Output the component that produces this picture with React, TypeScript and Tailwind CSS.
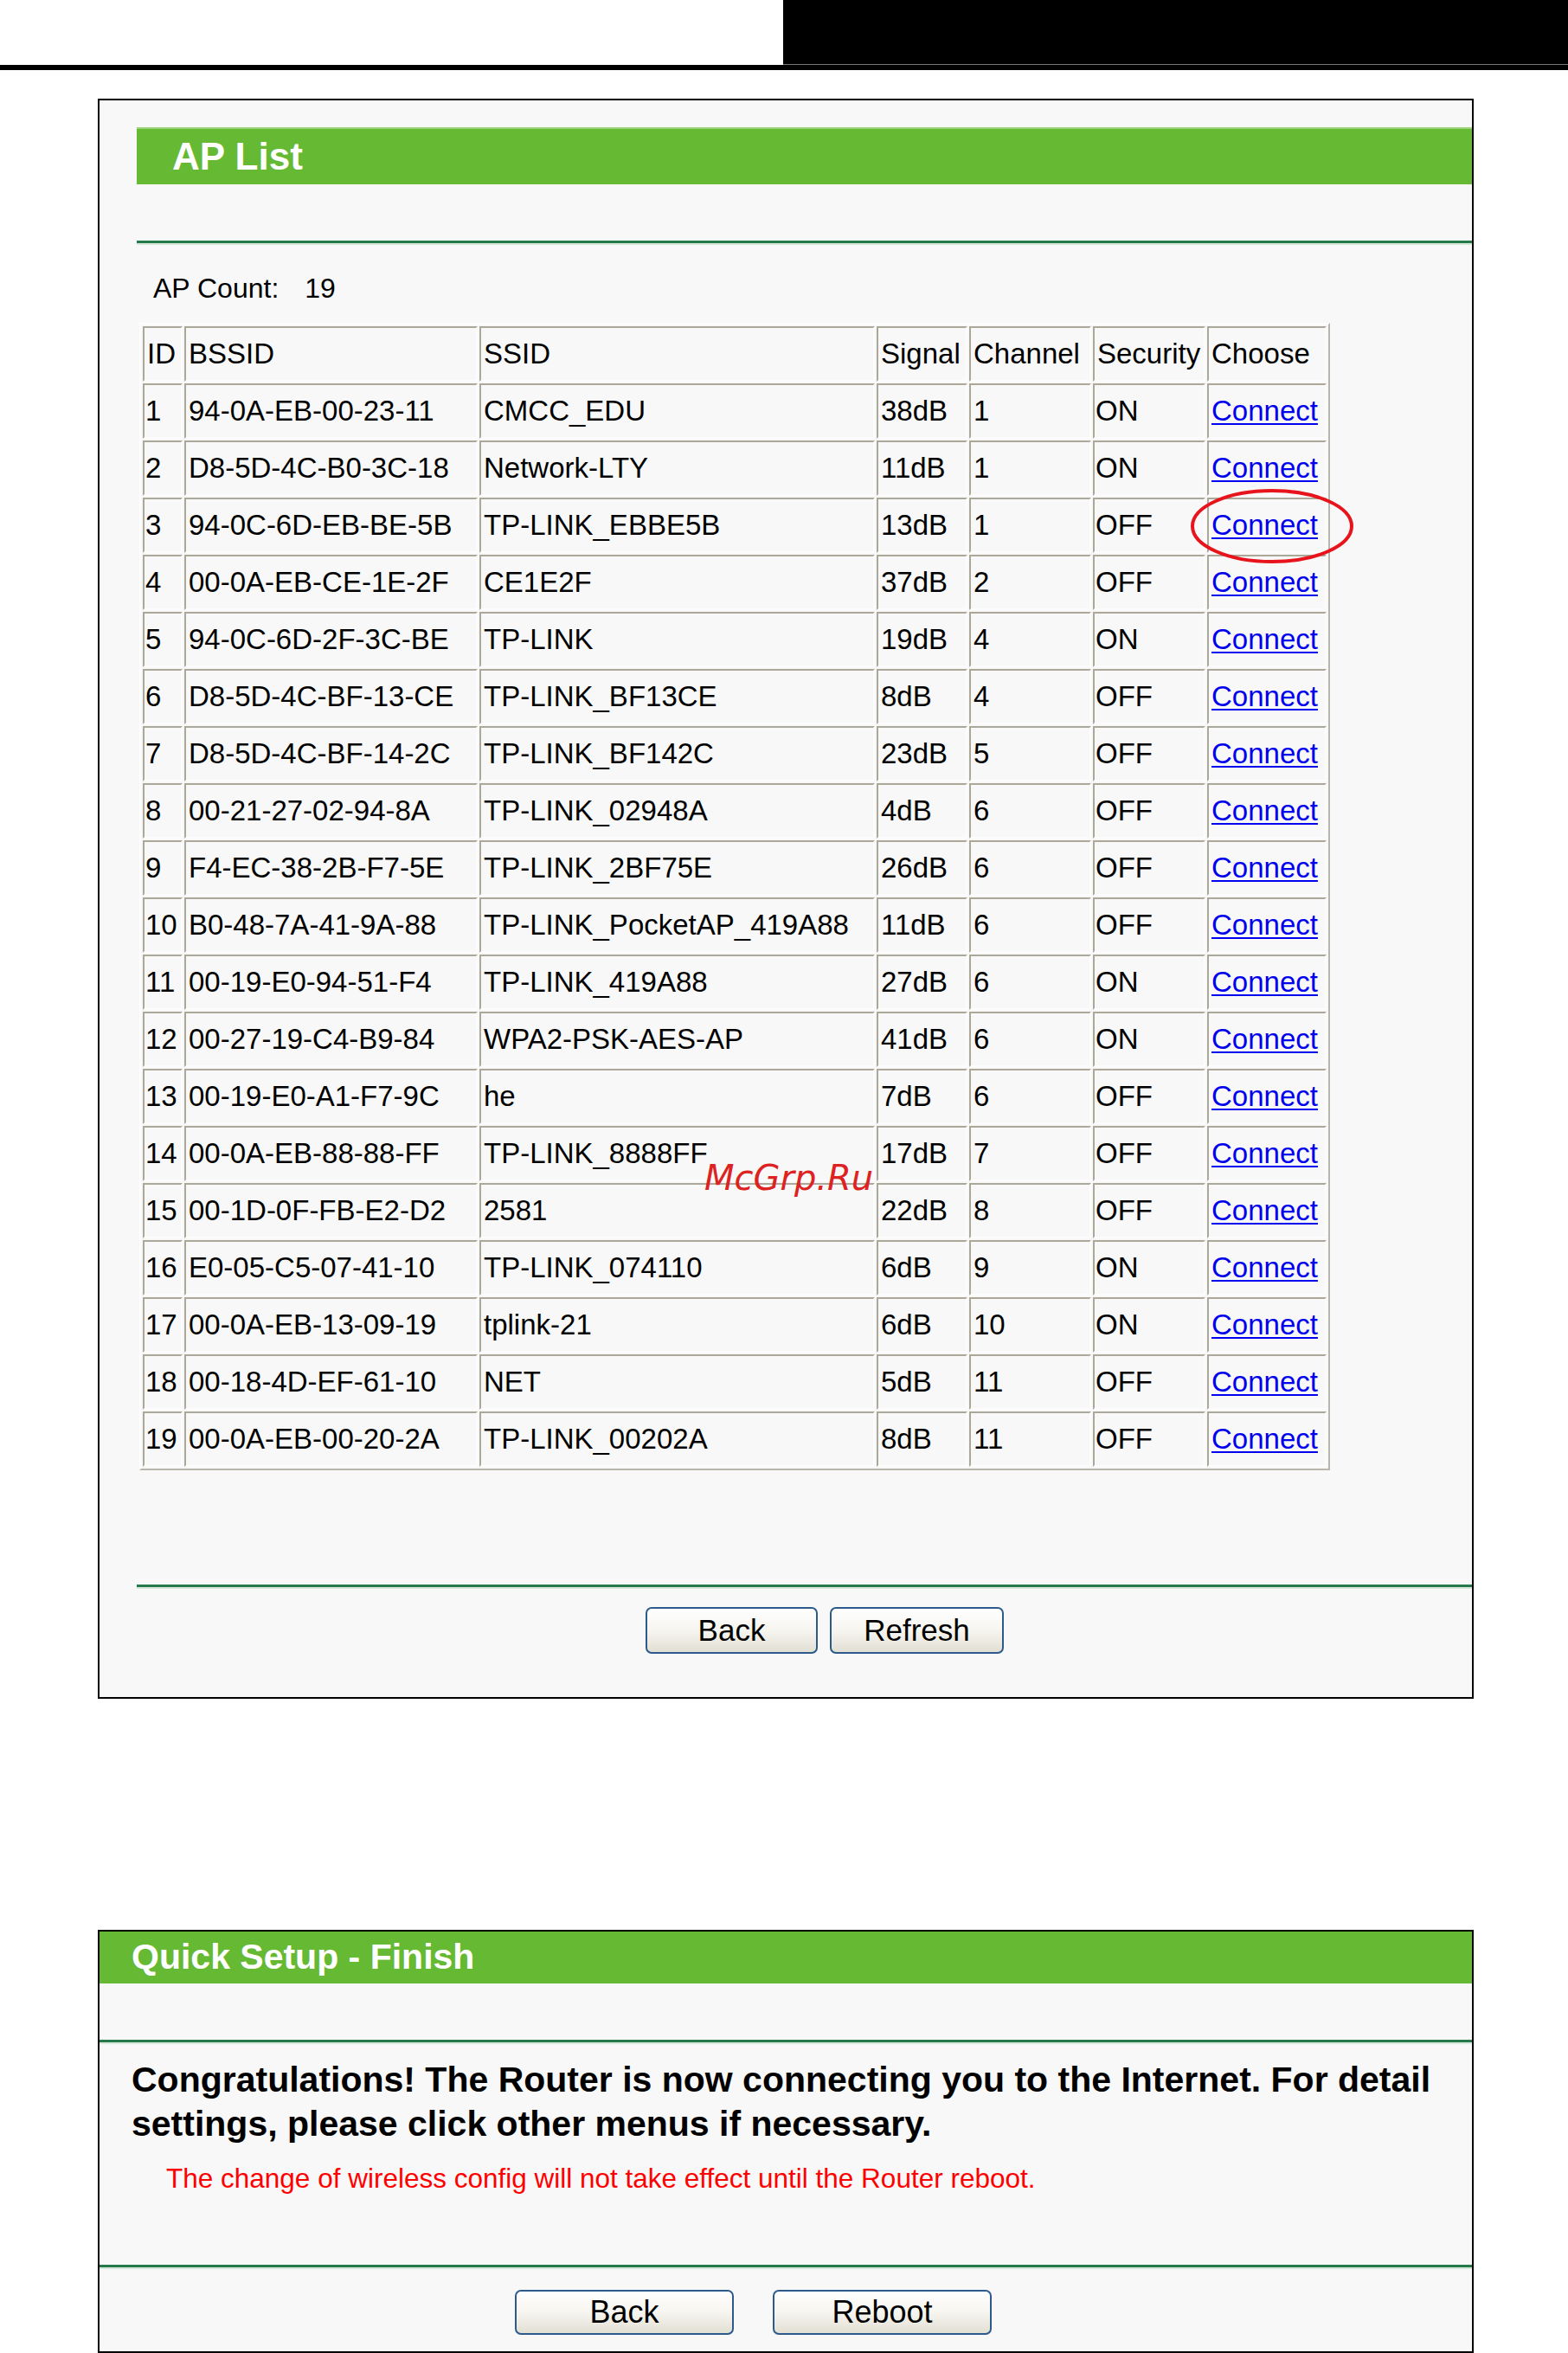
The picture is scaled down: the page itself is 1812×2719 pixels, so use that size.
import React from "react";

const rows: [string, string, string, string, string, string][] = [
  ["1", "94-0A-EB-00-23-11", "CMCC_EDU", "38dB", "1", "ON"],
  ["2", "D8-5D-4C-B0-3C-18", "Network-LTY", "11dB", "1", "ON"],
  ["3", "94-0C-6D-EB-BE-5B", "TP-LINK_EBBE5B", "13dB", "1", "OFF"],
  ["4", "00-0A-EB-CE-1E-2F", "CE1E2F", "37dB", "2", "OFF"],
  ["5", "94-0C-6D-2F-3C-BE", "TP-LINK", "19dB", "4", "ON"],
  ["6", "D8-5D-4C-BF-13-CE", "TP-LINK_BF13CE", "8dB", "4", "OFF"],
  ["7", "D8-5D-4C-BF-14-2C", "TP-LINK_BF142C", "23dB", "5", "OFF"],
  ["8", "00-21-27-02-94-8A", "TP-LINK_02948A", "4dB", "6", "OFF"],
  ["9", "F4-EC-38-2B-F7-5E", "TP-LINK_2BF75E", "26dB", "6", "OFF"],
  ["10", "B0-48-7A-41-9A-88", "TP-LINK_PocketAP_419A88", "11dB", "6", "OFF"],
  ["11", "00-19-E0-94-51-F4", "TP-LINK_419A88", "27dB", "6", "ON"],
  ["12", "00-27-19-C4-B9-84", "WPA2-PSK-AES-AP", "41dB", "6", "ON"],
  ["13", "00-19-E0-A1-F7-9C", "he", "7dB", "6", "OFF"],
  ["14", "00-0A-EB-88-88-FF", "TP-LINK_8888FF", "17dB", "7", "OFF"],
  ["15", "00-1D-0F-FB-E2-D2", "2581", "22dB", "8", "OFF"],
  ["16", "E0-05-C5-07-41-10", "TP-LINK_074110", "6dB", "9", "ON"],
  ["17", "00-0A-EB-13-09-19", "tplink-21", "6dB", "10", "ON"],
  ["18", "00-18-4D-EF-61-10", "NET", "5dB", "11", "OFF"],
  ["19", "00-0A-EB-00-20-2A", "TP-LINK_00202A", "8dB", "11", "OFF"],
];

const cell =
  "h-[64px] p-0 pl-[3px] align-middle text-left font-normal whitespace-nowrap border-2 border-t-[#aca899] border-l-[#aca899] border-b-[#fcfcfc] border-r-[#fcfcfc]";

function Separator() {
  return (
    <div>
      <div className="h-[3px] bg-[#25794b]" />
      <div className="h-[2px] bg-[#d5e8da]" />
    </div>
  );
}

function Btn({ label, w, h, size }: { label: string; w: string; h: string; size: string }) {
  return (
    <div
      className={`${w} ${h} ${size} flex items-center justify-center rounded-[7px] border-2 border-[#2c5a8c] bg-linear-to-b from-white via-[#f6f5f0] to-[#e2dfd3] text-black`}
    >
      {label}
    </div>
  );
}

export default function App() {
  return (
    <div
      className="relative w-[1812px] h-[2719px] overflow-hidden bg-white text-black"
      style={{ fontFamily: '"Liberation Sans", Arial, sans-serif' }}
    >
      {/* top bar */}
      <div className="flex h-[75px]">
        <div className="flex-1 bg-white" />
        <div className="w-[907px] bg-black border-b border-[#777]" />
      </div>
      <div className="h-[6px] bg-black" />

      {/* AP List panel */}
      <div className="mt-[33px] ml-[113px] w-[1590px] h-[1849px] border-2 border-black bg-[#f8f8f8] pt-[31px]">
        <div className="ml-[43px] h-[66px] bg-[#66b933] border-t-2 border-[#9fd47c] flex items-center pl-[41px] text-white font-bold text-[44px]">
          AP List
        </div>
        <div className="ml-[43px] mt-[65px]">
          <Separator />
        </div>
        <div className="mt-[30px] ml-[62px] h-[40px] flex items-center text-[32px]">
          <span>AP Count:</span>
          <span className="ml-[30px]">19</span>
        </div>
        <table className="mt-[20px] ml-[46px] w-[1376px] table-fixed border-separate border-spacing-[2px] border-2 border-t-[#fdfdfd] border-l-[#fdfdfd] border-r-[#b9b6ab] border-b-[#b9b6ab] text-[33px]">
          <colgroup>
            <col className="w-[46px]" />
            <col className="w-[339px]" />
            <col className="w-[457px]" />
            <col className="w-[105px]" />
            <col className="w-[141px]" />
            <col className="w-[130px]" />
            <col className="w-[138px]" />
          </colgroup>
          <thead>
            <tr>
              <th className={cell}>ID</th>
              <th className={cell}>BSSID</th>
              <th className={cell}>SSID</th>
              <th className={cell}>Signal</th>
              <th className={cell}>Channel</th>
              <th className={cell}>Security</th>
              <th className={cell}>Choose</th>
            </tr>
          </thead>
          <tbody>
            {rows.map((r) => (
              <tr key={r[0]}>
                <td className={`${cell} !pl-[1px]`}>{r[0]}</td>
                <td className={cell}>{r[1]}</td>
                <td className={cell}>{r[2]}</td>
                <td className={cell}>{r[3]}</td>
                <td className={cell}>{r[4]}</td>
                <td className={`${cell} !pl-[1px]`}>{r[5]}</td>
                <td className={cell}>
                  <span className="text-[#0000ee] underline decoration-2 underline-offset-[3px]">Connect</span>
                </td>
              </tr>
            ))}
          </tbody>
        </table>
        <div className="ml-[43px] mt-[132px]">
          <Separator />
        </div>
        <div className="mt-[21px] ml-[631px] flex gap-[14px]">
          <Btn label="Back" w="w-[199px]" h="h-[54px]" size="text-[35px]" />
          <Btn label="Refresh" w="w-[201px]" h="h-[54px]" size="text-[35px]" />
        </div>
      </div>

      {/* Quick Setup - Finish panel */}
      <div className="mt-[267px] ml-[113px] w-[1590px] h-[489px] border-2 border-black bg-[#f8f8f8]">
        <div className="h-[60px] bg-[#66b933] flex items-center pl-[37px] text-white font-bold text-[41px]">
          Quick Setup - Finish
        </div>
        <div className="mt-[65px]">
          <Separator />
        </div>
        <div className="mt-[16px] pl-[37px] w-[1560px] font-bold text-[41px] leading-[51px]">
          Congratulations! The Router is now connecting you to the Internet. For detail settings, please click other menus if necessary.
        </div>
        <div className="mt-[18px] pl-[77px] h-[40px] flex items-center text-[31.5px] text-[#ff0000]">
          The change of wireless config will not take effect until the Router reboot.
        </div>
        <div className="mt-[79px]">
          <Separator />
        </div>
        <div className="mt-[24px] ml-[480px] flex gap-[45px]">
          <Btn label="Back" w="w-[253px]" h="h-[52px]" size="text-[36px]" />
          <Btn label="Reboot" w="w-[253px]" h="h-[52px]" size="text-[36px]" />
        </div>
      </div>

      {/* red annotation ellipse */}
      <svg className="absolute left-[1374px] top-[563px]" width="192" height="90" viewBox="0 0 192 90">
        <ellipse cx="96" cy="45" rx="92" ry="41" fill="none" stroke="#e8141b" strokeWidth="4" />
      </svg>

      {/* watermark */}
      <div
        className="absolute left-[814px] top-[1341px] text-[40px] leading-none italic text-[#dd2222]"
        style={{ fontFamily: '"DejaVu Sans", sans-serif' }}
      >
        McGrp.Ru
      </div>
    </div>
  );
}
